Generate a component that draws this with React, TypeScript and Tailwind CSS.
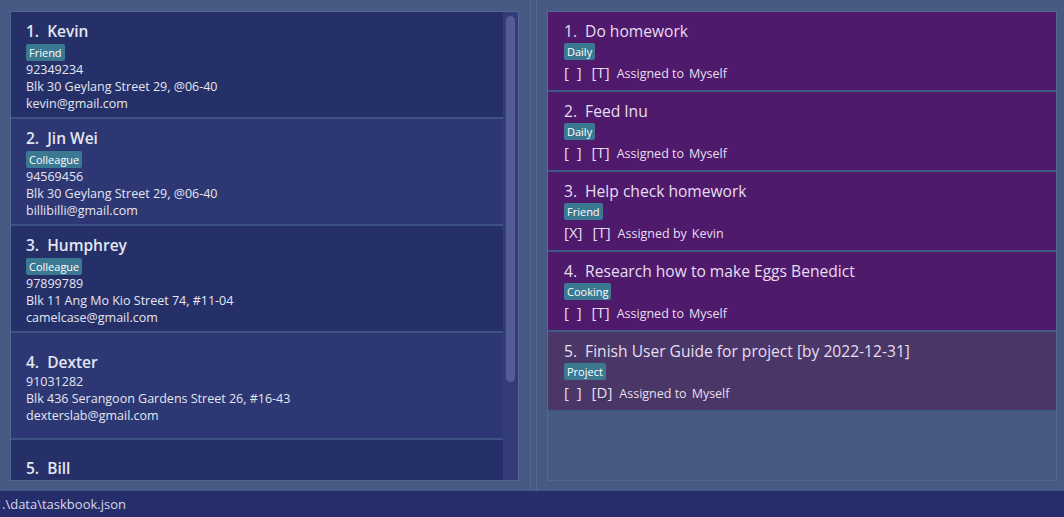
import React from 'react';

interface Person {
  name: string;
  tags: string[];
  phone: string;
  address: string;
  email: string;
}

interface Task {
  title: string;
  tag: string;
  done: boolean;
  kind: string;
  verb: string;
  who: string;
}

const people: Person[] = [
  { name: 'Kevin', tags: ['Friend'], phone: '92349234', address: 'Blk 30 Geylang Street 29, @06-40', email: 'kevin@gmail.com' },
  { name: 'Jin Wei', tags: ['Colleague'], phone: '94569456', address: 'Blk 30 Geylang Street 29, @06-40', email: 'billibilli@gmail.com' },
  { name: 'Humphrey', tags: ['Colleague'], phone: '97899789', address: 'Blk 11 Ang Mo Kio Street 74, #11-04', email: 'camelcase@gmail.com' },
  { name: 'Dexter', tags: [], phone: '91031282', address: 'Blk 436 Serangoon Gardens Street 26, #16-43', email: 'dexterslab@gmail.com' },
  { name: 'Bill', tags: [], phone: '', address: '', email: '' },
];

const tasks: Task[] = [
  { title: 'Do homework', tag: 'Daily', done: false, kind: 'T', verb: 'Assigned to', who: 'Myself' },
  { title: 'Feed Inu', tag: 'Daily', done: false, kind: 'T', verb: 'Assigned to', who: 'Myself' },
  { title: 'Help check homework', tag: 'Friend', done: true, kind: 'T', verb: 'Assigned by', who: 'Kevin' },
  { title: 'Research how to make Eggs Benedict', tag: 'Cooking', done: false, kind: 'T', verb: 'Assigned to', who: 'Myself' },
  { title: 'Finish User Guide for project [by 2022-12-31]', tag: 'Project', done: false, kind: 'D', verb: 'Assigned to', who: 'Myself' },
];

const Tag: React.FC<{ label: string }> = ({ label }) => (
  <span className="self-start rounded-[2px] bg-[#3b7891] px-[3px] text-[11px] leading-[17px] text-white">{label}</span>
);

const PersonCard: React.FC<{ person: Person; index: number }> = ({ person, index }) => {
  const bg = index % 2 === 0 ? 'bg-[#253069]' : 'bg-[#2c3774]';
  const isLast = index === people.length - 1;
  return (
    <div className={`${bg} ${isLast ? 'h-[40px] justify-end pb-[1px]' : 'h-[107px] justify-center border-b-2 pt-[3px]'} flex shrink-0 flex-col border-[#3d5182] pl-[15px] text-[#e4e6f0]`}>
      <div className="whitespace-pre text-[15.5px] leading-[22px] font-semibold">{`${index + 1}.  ${person.name}`}</div>
      {person.tags.length > 0 && (
        <div className="mt-[2px] flex gap-1">
          {person.tags.map((t) => <Tag key={t} label={t} />)}
        </div>
      )}
      {person.phone && (
        <div className="text-[12.5px] leading-[17px]">
          <div>{person.phone}</div>
          <div>{person.address}</div>
          <div>{person.email}</div>
        </div>
      )}
    </div>
  );
};

const TaskCard: React.FC<{ task: Task; index: number }> = ({ task, index }) => {
  const bg = index === 4 ? 'bg-[#4a3767]' : 'bg-[#4f1a6c]';
  return (
    <div className={`${bg} flex h-[80px] shrink-0 flex-col justify-center border-b-2 border-[#3f5a82] pl-[16px] pt-[1px] text-[#e6dff0]`}>
      <div className="whitespace-pre text-[15.6px] leading-[22px]">{`${index + 1}.  ${task.title}`}</div>
      <div className="mt-[1px] flex">
        <Tag label={task.tag} />
      </div>
      <div className="mt-[2px] flex items-baseline whitespace-pre leading-[20px]">
        <span className="text-[15px]">{task.done ? '[X]' : '[  ]'}</span>
        <span className="ml-[10px] text-[15px]">{`[${task.kind}]`}</span>
        <span className="ml-[7px] text-[12.5px]">{task.verb}</span>
        <span className="ml-[5px] text-[12.5px]">{task.who}</span>
      </div>
    </div>
  );
};

export default function App() {
  return (
    <div className="flex h-[517px] w-[1064px] flex-col overflow-hidden bg-[#465a83] font-['Open_Sans','Noto_Sans',sans-serif]">
      <div className="flex h-[491px] pt-[11px] pb-[10px]">
        {/* person list */}
        <div className="ml-[10px] flex w-[509px] border border-[#52668f]">
          <div className="flex flex-1 flex-col overflow-hidden">
            {people.map((p, i) => <PersonCard key={p.name} person={p} index={i} />)}
          </div>
          <div className="w-[15px] bg-[#343b79] px-[3px] pt-[4px]">
            <div className="h-[366px] rounded-[5px] bg-[#545c97]" />
          </div>
        </div>

        {/* divider */}
        <div className="ml-[11px] -mt-[11px] -mb-[10px] w-[7px] border-x border-[#52668f]" />

        {/* task list */}
        <div className="ml-[10px] flex w-[510px] flex-col border border-[#52668f]">
          {tasks.map((t, i) => <TaskCard key={t.title} task={t} index={i} />)}
        </div>
      </div>
      <div className="flex-1 bg-[#252e6a] pl-[2px] text-[13px] leading-[26px] text-[#d4d8ec]">.\data\taskbook.json</div>
    </div>
  );
}
